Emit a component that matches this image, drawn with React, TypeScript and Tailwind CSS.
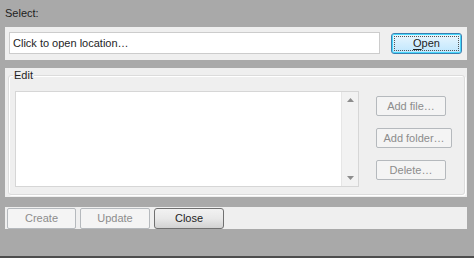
import React from "react";

const font = { fontFamily: '"Liberation Sans", Arial, sans-serif' };

function DisabledBtn({ label, w }: { label: string; w: string }) {
  return (
    <div
      className={`${w} h-[20px] flex items-center justify-center rounded-[2px] border border-[#b5b9bd] bg-[#f4f4f4] text-[#8c8c8c]`}
    >
      {label}
    </div>
  );
}

export default function App() {
  return (
    <div
      className="w-[474px] h-[258px] bg-[#a9a9a9] flex flex-col text-[11px] text-[#1e1e1e] leading-none"
      style={font}
    >
      <div className="h-[27px] pl-[5px] pt-[8px]">Select:</div>

      <div className="ml-[5px] mr-[7px] h-[33px] bg-[#efefef] flex items-start pt-[5px] pl-[4px]">
        <div className="w-[371px] h-[22px] bg-white border border-[#cccccc] flex items-center pl-[3px]">
          Click to open location…
        </div>
        <div className="ml-[11px] mt-[1px] w-[71px] h-[21px] rounded-[3px] border border-[#3c7fb1] bg-gradient-to-b from-[#eaf6fd] to-[#bee6fd] p-[2px] shadow-[inset_0_0_0_1px_#48d8fb]">
          <div className="w-full h-full border border-dotted border-[#555] flex items-center justify-center">
            <span>
              <span className="underline underline-offset-2">O</span>pen
            </span>
          </div>
        </div>
      </div>

      <div className="h-[8px]" />

      <div className="ml-[5px] mr-[7px] h-[129px] bg-[#efefef] pt-[7px] pl-[3px] pr-[2px]">
        <div className="relative h-[120px] rounded-[3px] border border-[#dcdcdc] shadow-[inset_1px_1px_0_#fff,1px_1px_0_#fff]">
          <div className="absolute left-[4px] top-[-6px] px-[1px] bg-[#efefef]">Edit</div>
          <div className="flex pt-[15px] pl-[6px]">
            <div className="w-[344px] h-[96px] bg-white border border-[#d6d6d6] flex justify-end">
              <div className="w-[17px] h-full bg-[#f2f2f2] border-l border-[#e6e6e6] flex flex-col items-center justify-between py-[6px]">
                <svg width="7" height="4" viewBox="0 0 7 4">
                  <path d="M0 4 L3.5 0 L7 4 Z" fill="#8d8d8d" />
                </svg>
                <svg width="7" height="4" viewBox="0 0 7 4">
                  <path d="M0 0 L3.5 4 L7 0 Z" fill="#8d8d8d" />
                </svg>
              </div>
            </div>
            <div className="ml-[17px] pt-[5px] flex flex-col gap-[12px]">
              <DisabledBtn label="Add file…" w="w-[70px]" />
              <DisabledBtn label="Add folder…" w="w-[76px]" />
              <DisabledBtn label="Delete…" w="w-[70px]" />
            </div>
          </div>
        </div>
      </div>

      <div className="h-[10px]" />

      <div className="ml-[5px] mr-[7px] h-[22px] bg-[#efefef] flex items-start pl-[2px] pt-[1px] gap-[4px]">
        <div className="w-[69px] h-[21px] flex items-center justify-center rounded-[2px] border border-[#b5b9bd] bg-[#f4f4f4] text-[#8c8c8c]">
          Create
        </div>
        <div className="w-[70px] h-[21px] flex items-center justify-center rounded-[2px] border border-[#b5b9bd] bg-[#f4f4f4] text-[#8c8c8c]">
          Update
        </div>
        <div className="w-[70px] h-[21px] flex items-center justify-center rounded-[3px] border border-[#707070] bg-gradient-to-b from-[#f2f2f2] via-[#e8e8e8] to-[#d2d2d2]">
          Close
        </div>
      </div>

      <div className="flex-1" />
      <div className="h-[2px] bg-[#4d4d4d]" />
    </div>
  );
}
